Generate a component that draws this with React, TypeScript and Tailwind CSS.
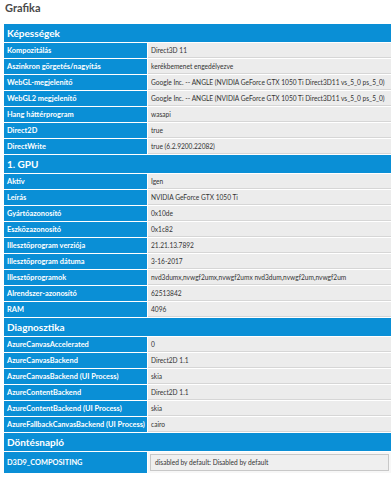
type Row = [string, string]

type Section = {
    title: string
    rows: Row[]
}

const sections: Section[] = [
    {
        title: 'Képességek',
        rows: [
            ['Kompozitálás', 'Direct3D 11'],
            ['Aszinkron görgetés/nagyítás', 'kerékbemenet engedélyezve'],
            ['WebGL-megjelenítő', 'Google Inc. -- ANGLE (NVIDIA GeForce GTX 1050 Ti Direct3D11 vs_5_0 ps_5_0)'],
            ['WebGL2 megjelenítő', 'Google Inc. -- ANGLE (NVIDIA GeForce GTX 1050 Ti Direct3D11 vs_5_0 ps_5_0)'],
            ['Hang háttérprogram', 'wasapi'],
            ['Direct2D', 'true'],
            ['DirectWrite', 'true (6.2.9200.22082)'],
        ],
    },
    {
        title: '1. GPU',
        rows: [
            ['Aktív', 'Igen'],
            ['Leírás', 'NVIDIA GeForce GTX 1050 Ti'],
            ['Gyártóazonosító', '0x10de'],
            ['Eszközazonosító', '0x1c82'],
            ['Illesztőprogram verziója', '21.21.13.7892'],
            ['Illesztőprogram dátuma', '3-16-2017'],
            ['Illesztőprogramok', 'nvd3dumx,nvwgf2umx,nvwgf2umx nvd3dum,nvwgf2um,nvwgf2um'],
            ['Alrendszer-azonosító', '62513842'],
            ['RAM', '4096'],
        ],
    },
    {
        title: 'Diagnosztika',
        rows: [
            ['AzureCanvasAccelerated', '0'],
            ['AzureCanvasBackend', 'Direct2D 1.1'],
            ['AzureCanvasBackend (UI Process)', 'skia'],
            ['AzureContentBackend', 'Direct2D 1.1'],
            ['AzureContentBackend (UI Process)', 'skia'],
            ['AzureFallbackCanvasBackend (UI Process)', 'cairo'],
        ],
    },
]

function SectionHeader({ title }: { title: string }) {
    return (
        <div className="h-[18px] mb-px bg-[#0a8fd6] text-white font-bold text-[10px] leading-[18px] pl-[3px]">
            {title}
        </div>
    )
}

export default function App() {
    return (
        <div className="bg-white w-[391px] h-[480px] overflow-hidden" style={{ fontFamily: 'Lato, "Open Sans", sans-serif' }}>
            <div className="h-6 pl-[5px] pt-[1px] text-[11px] font-bold text-[#4a4a4a] leading-[14px]">Grafika</div>

            <div className="ml-1">
                {sections.map(section => (
                    <div key={section.title}>
                        <SectionHeader title={section.title} />
                        {section.rows.map(([label, value]) => (
                            <div key={label} className="flex h-[15px] mb-px leading-[15px]">
                                <div className="w-[143px] shrink-0 bg-[#0a8fd6] text-white font-bold text-[7.4px] pl-[3px] whitespace-nowrap overflow-hidden">
                                    {label}
                                </div>
                                <div className="flex-1 ml-px bg-[#ececec] border-b border-[#d6d6d6] text-[#333] text-[6.6px] pl-[3px] whitespace-nowrap overflow-hidden">
                                    {value}
                                </div>
                            </div>
                        ))}
                    </div>
                ))}

                <SectionHeader title="Döntésnapló" />
                <div className="flex h-[21px]">
                    <div className="w-[143px] shrink-0 bg-[#0a8fd6] text-white font-bold text-[7.4px] pl-[3px] flex items-center">
                        D3D9_COMPOSITING
                    </div>
                    <div className="flex-1 ml-px bg-[#f7f7f7] p-[2px]">
                        <div className="h-full border border-[#c8c8c8] bg-[#efefef] text-[#333] text-[6.6px] pl-[4px] flex items-center whitespace-nowrap">
                            disabled by default: Disabled by default
                        </div>
                    </div>
                </div>
            </div>
        </div>
    )
}
